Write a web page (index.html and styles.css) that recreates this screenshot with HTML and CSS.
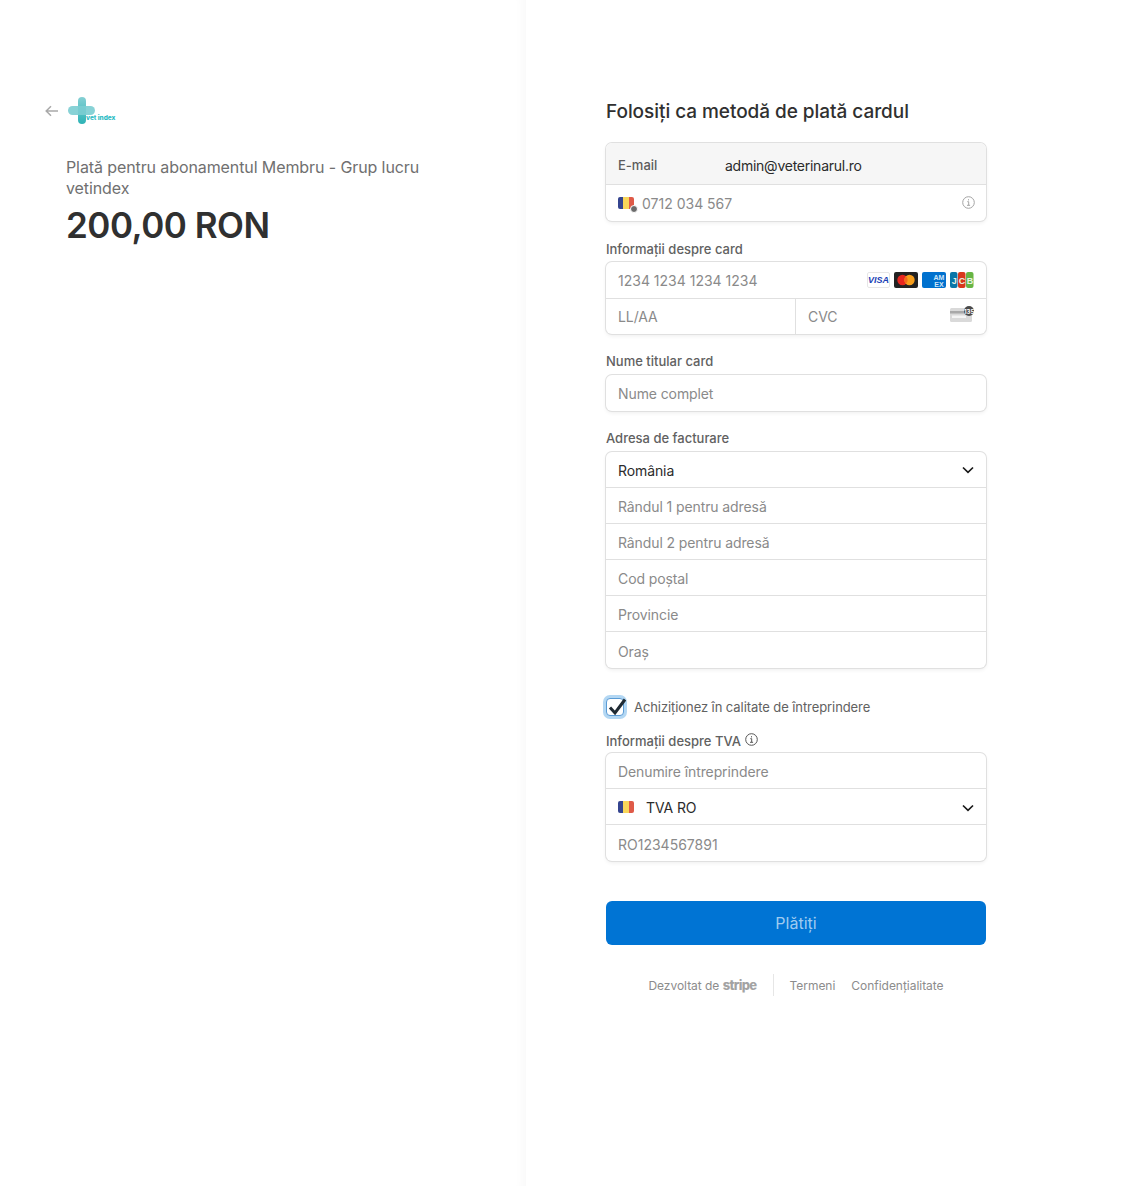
FILE: index.html
```html
<!DOCTYPE html>
<html lang="ro">

<head>
    <meta charset="UTF-8">
    <title>Plată vetindex</title>
    <link rel="stylesheet" href="styles.css">
</head>

<body>
    <div class="page">
        <div class="summary">
            <div class="brand">
                <svg class="back" width="14" height="12" viewBox="0 0 14 12"><path d="M13 6H1.500M6 1.200 1.200 6 6 10.800" fill="none" stroke="#a9a9a9" stroke-width="1.500"/></svg>
                <div class="logo">
                    <svg width="28" height="28" viewBox="0 0 28 28">
                        <defs>
                            <linearGradient id="stem" x1="0" y1="0" x2="0" y2="1">
                                <stop offset="0" stop-color="#86d0d4"/>
                                <stop offset="1" stop-color="#2db3b6"/>
                            </linearGradient>
                        </defs>
                        <rect x="10" y="0" width="8" height="27" rx="4" fill="url(#stem)"/>
                        <rect x="0" y="9" width="27" height="9" rx="4.500" fill="#7bcdd1" fill-opacity=".9"/>
                    </svg>
                    <span class="logo-text">vet index</span>
                </div>
            </div>
            <p class="product">Plată pentru abonamentul Membru - Grup lucru vetindex</p>
            <div class="amount">200,00 RON</div>
        </div>

        <div class="checkout">
            <form class="form">
                <h1>Folosiți ca metodă de plată cardul</h1>

                <div class="box contact">
                    <div class="row email">
                        <span class="email-label">E-mail</span>
                        <span class="value email-value">admin@veterinarul.ro</span>
                    </div>
                    <div class="row phone">
                        <span class="flag-wrap">
                            <span class="flag"><i class="blue"></i><i class="yellow"></i><i class="red"></i></span>
                            <span class="flag-badge"></span>
                        </span>
                        <span class="ph digits">0712 034 567</span>
                        <svg class="info phone-info" width="13" height="13" viewBox="0 0 13 13"><circle cx="6.500" cy="6.500" r="5.800" fill="none" stroke="#a3a3a3"/><path d="M5.300 5.700h1.400v3.400M5 9.300h3.100M6.500 3.200v1.200" fill="none" stroke="#a3a3a3"/></svg>
                    </div>
                </div>

                <div class="field-label card-label">Informații despre card</div>
                <div class="box">
                    <div class="row">
                        <span class="ph digits">1234 1234 1234 1234</span>
                        <div class="brands">
                            <svg width="24" height="16" viewBox="0 0 24 16"><rect x=".5" y=".5" width="22" height="15" rx="1.500" fill="#fff" stroke="#e6e6e6"/><text x="11.500" y="11" text-anchor="middle" class="visa">VISA</text></svg>
                            <svg width="24" height="16" viewBox="0 0 24 16"><rect width="24" height="16" rx="2" fill="#222"/><circle cx="8.500" cy="8" r="5.200" fill="#e8261f"/><circle cx="15.500" cy="8" r="5.200" fill="#f79e1b"/><path d="M12 4.200a5.200 5.200 0 0 1 0 7.600 5.200 5.200 0 0 1 0-7.600z" fill="#f26a1c"/></svg>
                            <svg width="24" height="16" viewBox="0 0 24 16"><rect width="24" height="16" rx="2" fill="#0071ce"/><text x="17" y="8" text-anchor="middle" class="amex">AM</text><text x="17" y="14.500" text-anchor="middle" class="amex">EX</text></svg>
                            <svg width="24" height="16" viewBox="0 0 24 16"><rect x="0" width="7.500" height="16" rx="2" fill="#0a76a8"/><rect x="8" width="7.500" height="16" rx="2" fill="#d8381c"/><rect x="16" width="7.500" height="16" rx="2" fill="#67b544"/><text x="4.200" y="11.500" text-anchor="middle" class="jcb">J</text><text x="12" y="11.500" text-anchor="middle" class="jcb">C</text><text x="20" y="11.500" text-anchor="middle" class="jcb">B</text></svg>
                        </div>
                    </div>
                    <div class="split">
                        <div class="row"><span class="ph">LL/AA</span></div>
                        <div class="row cvc">
                            <span class="ph">CVC</span>
                            <span class="cvc-icon">
                                <svg width="24" height="16" viewBox="0 0 24 16"><rect y="2" width="22" height="14" rx="1.500" fill="#d9d9d9"/><rect y="5" width="22" height="2.500" fill="#a8a8a8"/><rect x="2" y="9.500" width="14" height="2.500" fill="#f4f4f4"/><circle cx="19" cy="5" r="5" fill="#4a4a4a"/></svg>
                                <span class="cvc-num">135</span>
                            </span>
                        </div>
                    </div>
                </div>

                <div class="field-label name-label">Nume titular card</div>
                <div class="box">
                    <div class="row"><span class="ph">Nume complet</span></div>
                </div>

                <div class="field-label address-label">Adresa de facturare</div>
                <div class="box stack">
                    <div class="row">
                        <span class="value">România</span>
                        <svg class="chevron" width="12" height="8" viewBox="0 0 12 8"><path d="M1 1.500 6 6.300l5-4.800" fill="none" stroke="#1a1a1a" stroke-width="1.700"/></svg>
                    </div>
                    <div class="row"><span class="ph">Rândul 1 pentru adresă</span></div>
                    <div class="row"><span class="ph">Rândul 2 pentru adresă</span></div>
                    <div class="row"><span class="ph">Cod poștal</span></div>
                    <div class="row"><span class="ph">Provincie</span></div>
                    <div class="row"><span class="ph">Oraș</span></div>
                </div>

                <label class="business">
                    <span class="check">
                        <svg width="22" height="20" viewBox="0 0 22 20"><path d="M3 10.500 8 16 18 2.500" fill="none" stroke="#1f2a33" stroke-width="3"/></svg>
                    </span>
                    <span>Achiziționez în calitate de întreprindere</span>
                </label>

                <div class="field-label tva-label">
                    Informații despre TVA
                    <svg class="info tva-info" width="13" height="13" viewBox="0 0 13 13"><circle cx="6.500" cy="6.500" r="5.800" fill="none" stroke="#555"/><path d="M5.300 5.700h1.400v3.400M5 9.300h3.100M6.500 3.200v1.200" fill="none" stroke="#555"/></svg>
                </div>
                <div class="box stack">
                    <div class="row"><span class="ph">Denumire întreprindere</span></div>
                    <div class="row tva-row">
                        <span class="flag"><i class="blue"></i><i class="yellow"></i><i class="red"></i></span>
                        <span class="value">TVA RO</span>
                        <svg class="chevron" width="12" height="8" viewBox="0 0 12 8"><path d="M1 1.500 6 6.300l5-4.800" fill="none" stroke="#1a1a1a" stroke-width="1.700"/></svg>
                    </div>
                    <div class="row"><span class="ph digits">RO1234567891</span></div>
                </div>

                <button type="button" class="pay">Plătiți</button>

                <div class="footer">
                    <span class="powered">Dezvoltat de <b>stripe</b></span>
                    <span class="divider"></span>
                    <a>Termeni</a>
                    <a>Confidențialitate</a>
                </div>
            </form>
        </div>
    </div>
</body>

</html>
```

FILE: styles.css
```css
* {
    box-sizing: border-box;
}
body {
    margin: 0;
    font-family: Inter, "Liberation Sans", sans-serif;
    color: #1a1a1a;
    background: #fff;
}
.page {
    display: flex;
    min-height: 1186px;
}
.summary {
    width: 526px;
    flex-shrink: 0;
    padding: 97px 0 0 66px;
    box-shadow: inset -12px 0 12px -10px rgba(0,0,0,0.035);
}
.brand {
    display: flex;
    align-items: center;
    margin-left: -21px;
    height: 28px;
}
.back {
    margin-right: 9px;
}
.logo {
    position: relative;
    width: 50px;
    height: 28px;
}
.logo-text {
    position: absolute;
    left: 18px;
    top: 17px;
    font-size: 6.5px;
    font-weight: 800;
    color: #2fbcc4;
    white-space: nowrap;
}
.product {
    width: 380px;
    margin: 32px 0 0;
    font-size: 16px;
    line-height: 21px;
    font-weight: 400;
    letter-spacing: -0.1px;
    color: #707070;
}
.amount {
    margin-top: 5px;
    font-size: 35px;
    line-height: 43px;
    font-weight: 600;
    letter-spacing: -0.5px;
    color: #303030;
}
.checkout {
    flex: 1;
    padding: 98px 0 0 80px;
}
.form {
    width: 380px;
}
h1 {
    margin: 0 0 17px;
    font-size: 19px;
    line-height: 28px;
    font-weight: 500;
    letter-spacing: -0.05px;
    color: #303030;
}
.box {
    border-radius: 6px;
    background: #fff;
    box-shadow: 0 0 0 1px #e0e0e0, 0 2px 4px rgba(0,0,0,0.07);
    overflow: hidden;
    width: 380px;
}
.row {
    display: flex;
    align-items: center;
    height: 36px;
    padding: 0 12px;
    font-size: 14px;
    border-top: 1px solid #e0e0e0;
}
.row:first-child {
    border-top: 0;
}
.stack .row {
    padding-top: 2px;
}
.stack .row:first-child {
    height: 35px;
    padding-top: 1px;
}
.stack .row:last-child {
    height: 37px;
}
.ph {
    color: #8a8a8a;
    letter-spacing: -0.1px;
}
.ph.digits {
    letter-spacing: 0;
}
.value {
    color: #2b2b2b;
    letter-spacing: -0.1px;
}
.email {
    height: 41px;
    padding-top: 3px;
    background: #f6f6f6;
}
.email-label {
    width: 107px;
    font-size: 13px;
    font-weight: 500;
    color: #5c5c5c;
}
.email-value {
    letter-spacing: -0.25px;
}
.phone {
    height: 37px;
}
.flag-wrap {
    position: relative;
    display: flex;
    margin-right: 8px;
    margin-top: -1px;
}
.flag {
    display: flex;
    width: 16px;
    height: 12px;
    border-radius: 2px;
    overflow: hidden;
}
.flag i {
    flex: 1;
}
.blue {
    background: #34448f;
}
.yellow {
    background: #f8d65a;
}
.red {
    background: #df5a48;
}
.flag-badge {
    position: absolute;
    right: -4px;
    bottom: -4px;
    width: 8px;
    height: 8px;
    border-radius: 50%;
    background: #6b6b6b;
    border: 1px solid #fff;
}
.phone-info {
    margin-left: auto;
    margin-right: -1px;
    margin-top: -2px;
}
.field-label {
    font-size: 13px;
    line-height: 16px;
    font-weight: 500;
    color: #616161;
}
.card-label {
    margin: 20px 0 5px;
}
.name-label {
    margin: 19px 0 6px;
}
.address-label {
    margin: 19px 0 6px;
}
.tva-label {
    display: flex;
    align-items: center;
    gap: 4px;
    margin: 14px 0 4px;
}
.tva-info {
    margin-top: -3px;
}
.brands {
    display: flex;
    gap: 4px;
    margin-left: auto;
}
.brands svg:first-child {
    margin-right: -1px;
}
.visa {
    font: italic 800 9px "Liberation Sans", sans-serif;
    fill: #1a3fb5;
}
.amex {
    font: 700 7px "Liberation Sans", sans-serif;
    fill: #cfe6f8;
}
.jcb {
    font: 700 9px "Liberation Sans", sans-serif;
    fill: #e8f3e6;
}
.split {
    display: flex;
    border-top: 1px solid #e0e0e0;
}
.split .row {
    height: 35px;
    border-top: 0;
}
.split .row:first-child {
    flex: none;
    width: 189px;
}
.cvc {
    flex: 1;
    border-left: 1px solid #e0e0e0;
    justify-content: space-between;
}
.cvc-icon {
    position: relative;
    display: flex;
    margin: -6px 0 0 0;
}
.cvc-num {
    position: absolute;
    right: 0;
    top: 2px;
    width: 10px;
    text-align: center;
    font-size: 6px;
    font-weight: 700;
    color: #fff;
}
.chevron {
    margin-left: auto;
}
.business {
    display: flex;
    align-items: center;
    gap: 10px;
    margin: 27px 0 0;
    height: 24px;
    font-size: 13px;
    letter-spacing: -0.08px;
    color: #616161;
}
.check {
    position: relative;
    width: 18px;
    height: 18px;
    border-radius: 4px;
    border: 1px solid #5a9bd5;
    background: #fff;
    box-shadow: 0 0 0 3px #b3d7f3;
    flex-shrink: 0;
}
.check svg {
    position: absolute;
    left: 0;
    top: -2px;
}
.tva-row .flag {
    margin-right: 12px;
    margin-top: -2px;
}
.pay {
    display: block;
    width: 380px;
    height: 44px;
    margin-top: 40px;
    border: 0;
    border-radius: 6px;
    background: #0074d4;
    color: #9fcbf0;
    font: 400 16px Inter, "Liberation Sans", sans-serif;
}
.footer {
    display: flex;
    align-items: center;
    justify-content: center;
    margin-top: 28px;
    height: 24px;
    font-size: 12px;
    letter-spacing: -0.03px;
    color: #8c8c8c;
}
.powered b {
    font-weight: 800;
    font-size: 13px;
    letter-spacing: -0.65px;
    color: #a3a3a3;
}
.divider {
    width: 1px;
    height: 22px;
    background: #e6e6e6;
    margin: 0 16px;
}
.footer a + a {
    margin-left: 16px;
}
```
